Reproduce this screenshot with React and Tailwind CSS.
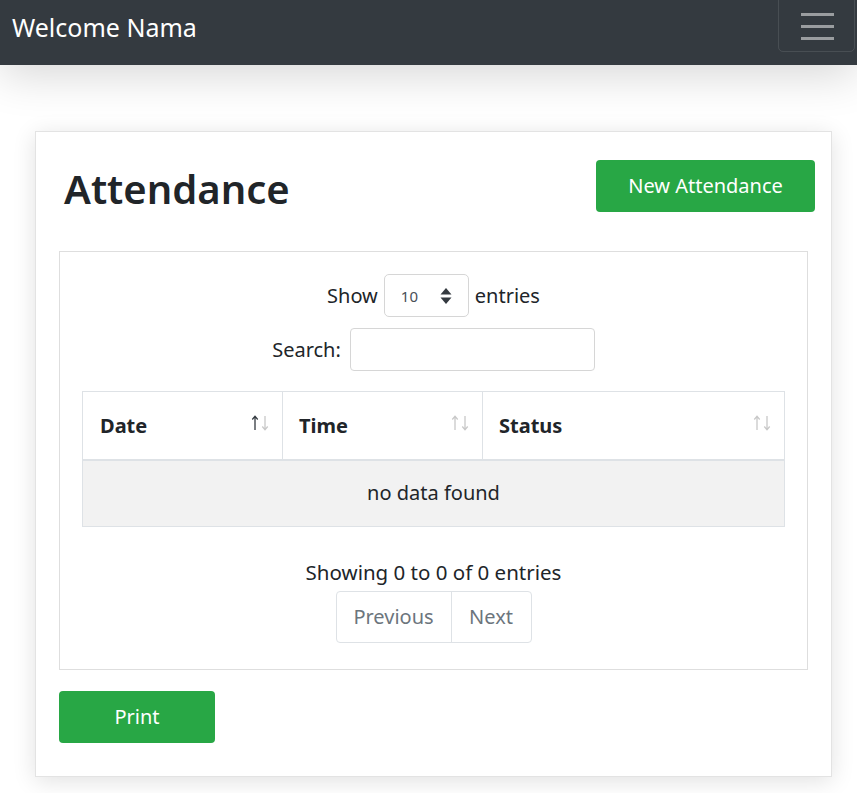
import React from "react";

function SortIcon({ active }) {
  const up = active ? "#343a40" : "#c8c8c8";
  const down = "#c8c8c8";
  return (
    <svg width="18" height="16" viewBox="0 0 18 16" fill="none" strokeWidth="1.3">
      <path d="M4 15 L4 1.5 M1.3 4.5 L4 1.2 L6.7 4.5" stroke={up} />
      <path d="M14 1 L14 14.5 M11.3 11.5 L14 14.8 L16.7 11.5" stroke={down} />
    </svg>
  );
}

export default function App() {
  return (
    <div
      className="min-h-[793px] bg-white text-[#212529]"
      style={{ fontFamily: '"Noto Sans", "Open Sans", sans-serif' }}
    >
      <nav className="relative z-10 flex h-[65px] items-start justify-between bg-[#343a40] pl-[12px] pr-[2px] shadow-[0_10px_45px_rgba(0,0,0,0.16)]">
        <span className="mt-[10px] text-[25px] leading-[34px] text-white">Welcome Nama</span>
        <button className="-mt-[10px] flex h-[62px] w-[77px] flex-col items-center justify-center gap-[9px] rounded-[5px] border border-white/10 pt-[10px] pl-[2px]">
          <span className="block h-[3px] w-[33px] bg-white/50" />
          <span className="block h-[3px] w-[33px] bg-white/50" />
          <span className="block h-[3px] w-[33px] bg-white/50" />
        </button>
      </nav>

      <div className="pt-[66px] pl-[35px]">
        <div className="w-[797px] border border-[#e3e3e3] bg-white pb-[33px] shadow-[0_4px_22px_rgba(0,0,0,0.12)]">
          <div className="flex items-start justify-between pt-[28px] pl-[28px] pr-[16px]">
            <h1 className="mt-[1px] text-[40px] font-semibold leading-[56px]">Attendance</h1>
            <button className="h-[52px] w-[219px] rounded-[4px] bg-[#28a745] text-[20px] text-white">
              New Attendance
            </button>
          </div>

          <div className="mx-[23px] mt-[34px] border border-[#dedede] px-[22px] pt-[22px] pb-[26px]">
            <div className="flex items-center justify-center gap-[6px] text-[20px]">
              <span>Show</span>
              <div className="flex h-[43px] w-[85px] items-center justify-between rounded-[5px] border border-[#d6d6d6] pl-[16px] pr-[16px]">
                <span className="pt-[2px] text-[15px] text-[#495057]">10</span>
                <svg width="12" height="18" viewBox="0 0 12 18">
                  <path d="M6 1 L11.5 7.5 L0.5 7.5 Z" fill="#343a40" />
                  <path d="M6 17 L11.5 10.5 L0.5 10.5 Z" fill="#343a40" />
                </svg>
              </div>
              <span>entries</span>
            </div>
            <div className="mt-[11px] flex items-center justify-center gap-[9px] text-[20px]">
              <span>Search:</span>
              <div className="h-[43px] w-[245px] rounded-[4px] border border-[#d6d6d6]" />
            </div>

            <table className="mt-[20px] w-full border-collapse text-[20px]">
              <thead>
                <tr className="h-[68px]">
                  <th className="w-[200px] border border-b-2 border-[#dee2e6] pl-[17px] pr-[13px] text-left font-bold">
                    <div className="flex items-center justify-between">
                      <span className="pt-[2px]">Date</span>
                      <span className="-mt-[4px]"><SortIcon active /></span>
                    </div>
                  </th>
                  <th className="w-[200px] border border-b-2 border-[#dee2e6] pl-[16px] pr-[13px] text-left font-bold">
                    <div className="flex items-center justify-between">
                      <span className="pt-[2px]">Time</span>
                      <span className="-mt-[4px]"><SortIcon /></span>
                    </div>
                  </th>
                  <th className="border border-b-2 border-[#dee2e6] pl-[16px] pr-[13px] text-left font-bold">
                    <div className="flex items-center justify-between">
                      <span className="pt-[2px]">Status</span>
                      <span className="-mt-[4px]"><SortIcon /></span>
                    </div>
                  </th>
                </tr>
              </thead>
              <tbody>
                <tr className="h-[67px] bg-[#f2f2f2]">
                  <td colSpan={3} className="border border-[#dee2e6] text-center">
                    no data found
                  </td>
                </tr>
              </tbody>
            </table>

            <div className="mt-[30px] text-center text-[20.5px] leading-[30px]">
              Showing 0 to 0 of 0 entries
            </div>
            <div className="mt-[4px] flex justify-center text-[20px] text-[#6c757d]">
              <div className="flex h-[52px] rounded-[4px] border border-[#dee2e6]">
                <span className="flex w-[115px] items-center justify-center border-r border-[#dee2e6]">Previous</span>
                <span className="flex w-[79px] items-center justify-center">Next</span>
              </div>
            </div>
          </div>

          <button className="mt-[21px] ml-[23px] h-[52px] w-[156px] rounded-[4px] bg-[#28a745] text-[20px] text-white">
            Print
          </button>
        </div>
      </div>
    </div>
  );
}
